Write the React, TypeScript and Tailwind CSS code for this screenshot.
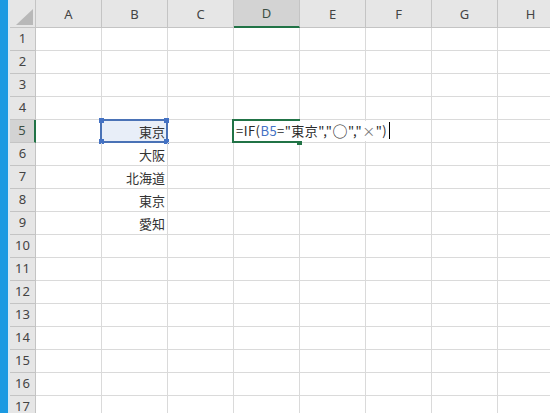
import React from 'react';

const COLS = ['A', 'B', 'C', 'D', 'E', 'F', 'G', 'H'];
const ROWS = Array.from({ length: 17 }, (_, i) => i + 1);

const cellData: Record<string, string> = {
  B5: '東京',
  B6: '大阪',
  B7: '北海道',
  B8: '東京',
  B9: '愛知',
};

const uiFont = { fontFamily: '"Noto Sans", "Liberation Sans", sans-serif' };
const cellFont = { fontFamily: '"Noto Sans CJK JP", "Noto Sans", sans-serif' };

function Handle({ className }: { className: string }) {
  return <span className={`absolute w-[5px] h-[5px] bg-[#4472c4] ${className}`} />;
}

function RefHighlight() {
  // blue box around B5 while the formula is being typed
  return (
    <div className="absolute -top-[1px] -left-[2px] -right-[1px] -bottom-[1px] border-2 border-[#4a72b6] bg-[#e8eef8] z-0">
      <Handle className="-top-[3px] -left-[3px]" />
      <Handle className="-top-[3px] -right-[3px]" />
      <Handle className="-bottom-[3px] -left-[3px]" />
      <Handle className="-bottom-[3px] -right-[3px]" />
    </div>
  );
}

function ActiveEditor() {
  return (
    <>
      <div className="absolute -top-[1px] -left-[2px] -right-[1px] -bottom-[1px] border-2 border-[#217346] z-10" />
      <span className="absolute -right-[3px] -bottom-[3px] w-[5px] h-[5px] bg-[#217346] z-10" />
      <div
        className="absolute left-[1px] top-[1px] bottom-[1px] z-20 flex items-end pb-[1px] pl-[1px] pr-[2px] bg-white whitespace-nowrap text-[13px] leading-[18px] tracking-[0.45px] text-[#2a2a2a]"
        style={cellFont}
      >
        <span>=IF(</span>
        <span className="text-[#4472c4]">B5</span>
        <span>="東京","</span>
        <span className="text-[15px] leading-[18px]">○</span>
        <span>","</span>
        <span className="text-[#777]">×</span>
        <span>")</span>
        <span className="ml-[2px] mb-[1px] w-[1px] h-[17px] bg-black" />
      </div>
    </>
  );
}

export default function App() {
  return (
    <div className="flex w-[550px] h-[413px] overflow-hidden bg-white">
      <div className="w-[8px] shrink-0 bg-[#1b9ae2]" />
      <div className="w-[2px] shrink-0 bg-[#d8e8f3]" />
      <div className="flex flex-col">
        <div className="flex h-[28px] shrink-0">
          <div className="relative w-[26px] shrink-0 bg-[#e6e6e6] border-r border-b border-[#c4c4c4]">
            <svg className="absolute left-[6px] top-[9px]" width="17" height="16" viewBox="0 0 17 16">
              <polygon points="0,16 17,16 17,0" fill="#b8b8b8" />
            </svg>
          </div>
          {COLS.map((c) =>
            c === 'D' ? (
              <div
                key={c}
                className="w-[66px] shrink-0 flex items-center justify-center pt-[2px] bg-[#d3d3d3] border-r border-[#c4c4c4] border-b-2 border-b-[#217346] text-[13px] text-[#3c4f44]"
                style={uiFont}
              >
                {c}
              </div>
            ) : (
              <div
                key={c}
                className="w-[66px] shrink-0 flex items-center justify-center pt-[2px] bg-[#e6e6e6] border-r border-b border-[#c4c4c4] text-[13px] text-[#444]"
                style={uiFont}
              >
                {c}
              </div>
            )
          )}
        </div>
        {ROWS.map((r) => (
          <div key={r} className="flex h-[23px] shrink-0">
            {r === 5 ? (
              <div
                className="w-[26px] shrink-0 flex items-center justify-center bg-[#d3d3d3] border-b border-[#c4c4c4] border-r-2 border-r-[#217346] text-[13px] text-[#3c4f44]"
                style={uiFont}
              >
                {r}
              </div>
            ) : (
              <div
                className="w-[26px] shrink-0 flex items-center justify-center bg-[#e6e6e6] border-r border-b border-[#c4c4c4] text-[13px] text-[#444]"
                style={uiFont}
              >
                {r}
              </div>
            )}
            {COLS.map((c) => {
              const key = `${c}${r}`;
              return (
                <div
                  key={key}
                  className="relative w-[66px] shrink-0 border-r border-b border-[#dadada]"
                >
                  {key === 'B5' && <RefHighlight />}
                  {key === 'D5' && <ActiveEditor />}
                  {cellData[key] && (
                    <div
                      className="relative z-[1] h-full flex items-end justify-end pr-[2px] pb-[1px] text-[13px] leading-[18px] text-[#333]"
                      style={cellFont}
                    >
                      {cellData[key]}
                    </div>
                  )}
                </div>
              );
            })}
          </div>
        ))}
      </div>
    </div>
  );
}
